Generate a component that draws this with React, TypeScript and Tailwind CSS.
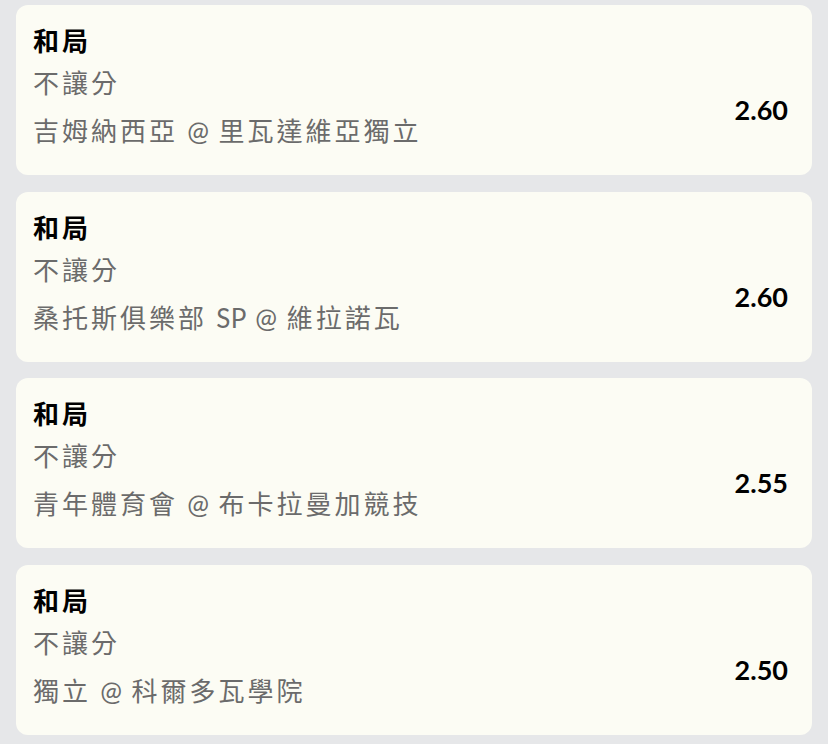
const rows = [
  { teams: '吉姆納西亞 @ 里瓦達維亞獨立', odds: '2.60' },
  { teams: '桑托斯俱樂部 SP @ 維拉諾瓦', odds: '2.60' },
  { teams: '青年體育會 @ 布卡拉曼加競技', odds: '2.55' },
  { teams: '獨立 @ 科爾多瓦學院', odds: '2.50' },
]

// latin runs keep normal spacing, only the CJK glyphs are spread
function Teams({ text }: { text: string }) {
  const parts = text.split(/([\x20-\x7e]+)/).filter(Boolean)
  return (
    <>
      {parts.map((p, i) =>
        /^[\x20-\x7e]+$/.test(p) ? (
          <span key={i} className="tracking-[0.5px] [word-spacing:2px]">{p}</span>
        ) : (
          <span key={i}>{p}</span>
        )
      )}
    </>
  )
}

export default function App() {
  return (
    <div
      className="min-h-[744px] bg-[#e6e7e9] px-4 pt-[5px] flex flex-col gap-[16.7px]"
      style={{ fontFamily: 'Lato, "Noto Sans CJK TC", sans-serif' }}
    >
      {rows.map((row, i) => (
        <div key={i} className="h-[170px] shrink-0 rounded-xl bg-[#fcfcf4] flex justify-between pl-[17px] pr-6 pt-[15px]">
          <div className="flex flex-col text-[26px] leading-[42px] tracking-[3px]">
            <div className="font-bold text-black">和局</div>
            <div className="text-[#6b6b6b]">不讓分</div>
            <div className="mt-[6px] text-[#6b6b6b]">
              <Teams text={row.teams} />
            </div>
          </div>
          <div className="pt-[69px] text-[27px] leading-[42px] font-bold text-black">{row.odds}</div>
        </div>
      ))}
    </div>
  )
}
